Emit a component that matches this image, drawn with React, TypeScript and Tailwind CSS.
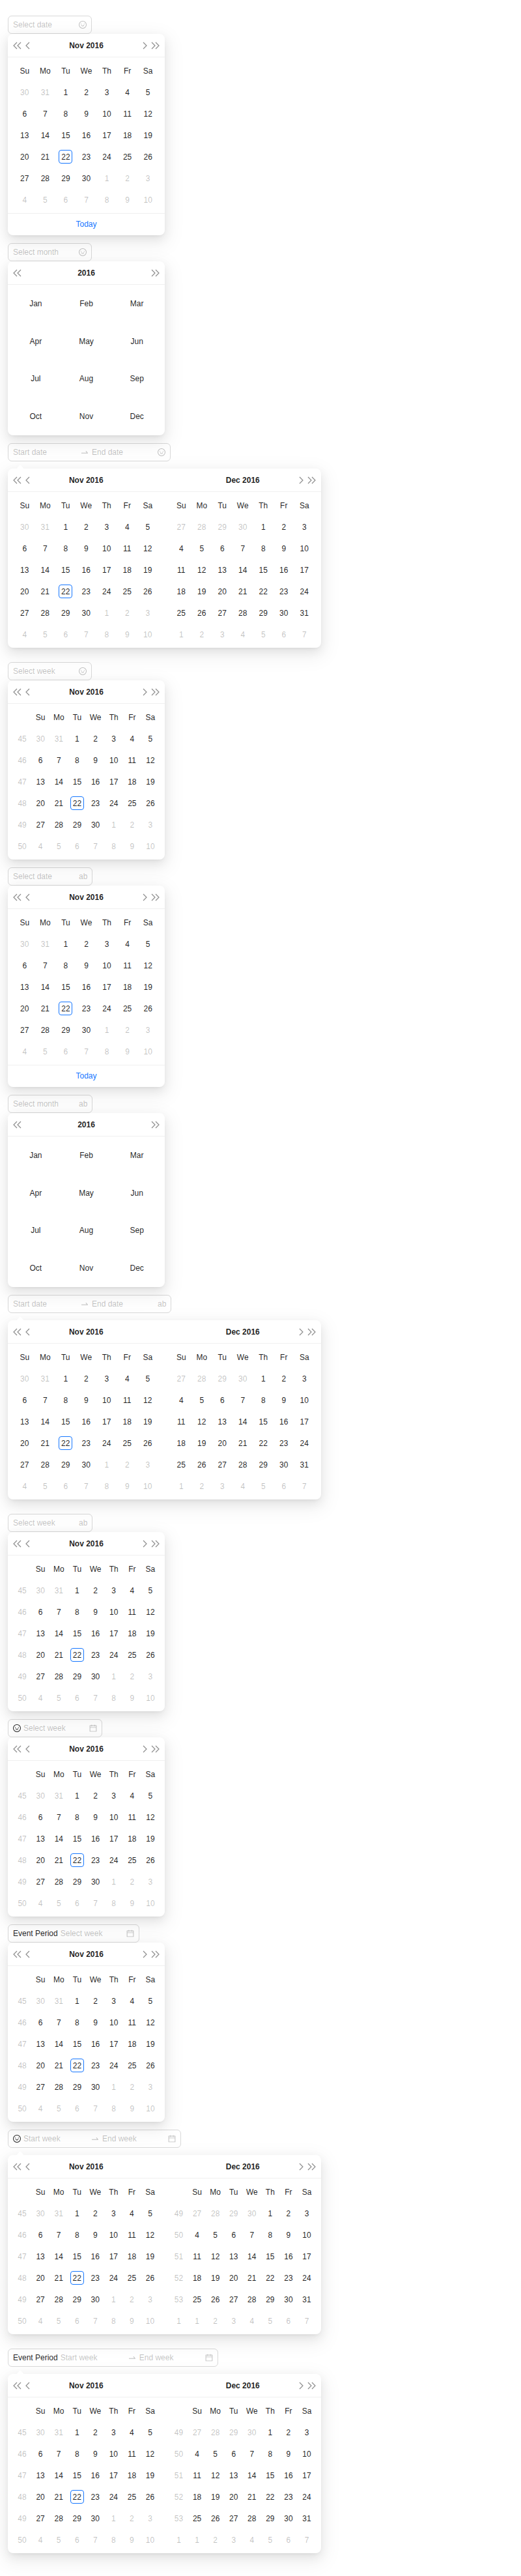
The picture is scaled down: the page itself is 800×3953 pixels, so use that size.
import { useId, type ReactNode } from 'react';
import { AiOutlineCalendar, AiOutlineSwapRight } from 'react-icons/ai';

const weekDays = ['Su', 'Mo', 'Tu', 'We', 'Th', 'Fr', 'Sa'];

const monthRows = [
  ['Jan', 'Feb', 'Mar'],
  ['Apr', 'May', 'Jun'],
  ['Jul', 'Aug', 'Sep'],
  ['Oct', 'Nov', 'Dec'],
];

type Month = {
  title: string;
  offset: number;
  length: number;
  previousLength: number;
  weeks: number[];
  today?: number;
};

const november: Month = {
  title: 'Nov 2016',
  offset: 2,
  length: 30,
  previousLength: 31,
  weeks: [45, 46, 47, 48, 49, 50],
  today: 22,
};

const december: Month = {
  title: 'Dec 2016',
  offset: 4,
  length: 31,
  previousLength: 30,
  weeks: [49, 50, 51, 52, 53, 1],
};

const smile = (
  <svg viewBox="64 64 896 896" className="size-3" fill="currentColor" aria-hidden="true">
    <circle cx="512" cy="512" r="410" fill="none" stroke="currentColor" strokeWidth="76" />
    <circle cx="336" cy="421" r="48" />
    <circle cx="688" cy="421" r="48" />
    <path d="M664 533h-48.1c-4.2 0-7.8 3.2-8.1 7.4C604 589.9 562.5 629 512 629s-92.1-39.1-95.8-88.6c-.3-4.2-3.9-7.4-8.1-7.4H360a8 8 0 0 0-8 8.4c4.4 84.3 74.5 151.6 160 151.6s155.6-67.3 160-151.6a8 8 0 0 0-8-8.4z" />
  </svg>
);
const calendar = <AiOutlineCalendar viewBox="64 64 896 896" className="size-3" aria-hidden="true" />;

function getDay(month: Month, index: number) {
  const day = index - month.offset + 1;
  if (day < 1) return { day: day + month.previousLength, inView: false };
  if (day > month.length) return { day: day - month.length, inView: false };
  return { day, inView: true };
}

type NavKind = 'superPrev' | 'prev' | 'next' | 'superNext';

const navs: Record<NavKind, { label: string; path: string; className: string; viewBox: string }> = {
  superPrev: { label: 'Previous year', path: 'M6 1L1 6l5 5M12 1L7 6l5 5', className: 'w-[13px]', viewBox: '0 0 13 12' },
  prev: { label: 'Previous month', path: 'M6 1L1 6l5 5', className: 'w-[7px]', viewBox: '0 0 7 12' },
  next: { label: 'Next month', path: 'M1 1l5 5l-5 5', className: 'w-[7px]', viewBox: '0 0 7 12' },
  superNext: { label: 'Next year', path: 'M1 1l5 5l-5 5M7 1l5 5l-5 5', className: 'w-[13px]', viewBox: '0 0 13 12' },
};

function NavButton({ kind }: { kind: NavKind }) {
  const nav = navs[kind];
  return (
    <button type="button" aria-label={nav.label} className="flex cursor-pointer items-center text-black/45">
      <svg viewBox={nav.viewBox} className={`h-3 ${nav.className}`} fill="none" stroke="currentColor" strokeWidth="1.2">
        <path d={nav.path} />
      </svg>
    </button>
  );
}

function PanelHeader({ title, before, after }: { title: string; before: NavKind[]; after: NavKind[] }) {
  return (
    <div className="grid h-9 grid-cols-[1fr_auto_1fr] items-center border-b border-[#f0f0f0] px-2">
      <div className="flex gap-1.5">
        {before.map((kind) => (
          <NavButton key={kind} kind={kind} />
        ))}
      </div>
      <button type="button" className="cursor-pointer leading-8 font-bold">
        {title}
      </button>
      <div className="flex justify-end gap-1.5">
        {after.map((kind) => (
          <NavButton key={kind} kind={kind} />
        ))}
      </div>
    </div>
  );
}

type DatePanelProps = {
  month: Month;
  showWeek?: boolean;
  before?: NavKind[];
  after?: NavKind[];
};

function DatePanel({
  month,
  showWeek = false,
  before = ['superPrev', 'prev'],
  after = ['next', 'superNext'],
}: DatePanelProps) {
  return (
    <div className="min-w-0 flex-1">
      <PanelHeader title={month.title} before={before} after={after} />
      <div className={`py-1 ${showWeek ? 'px-2' : 'px-2.5'}`}>
        <table className="w-full table-fixed border-collapse text-center">
          <thead>
            <tr className="h-[33px]">
              {showWeek && <th aria-label="Week" />}
              {weekDays.map((day) => (
                <th key={day} scope="col" className="p-0 font-normal">
                  {day}
                </th>
              ))}
            </tr>
          </thead>
          <tbody>
            {month.weeks.map((week, row) => (
              <tr key={week} className="h-[33px]">
                {showWeek && <td className="p-0 text-black/25">{week}</td>}
                {weekDays.map((name, column) => {
                  const { day, inView } = getDay(month, row * 7 + column);
                  const isToday = inView && day === month.today;
                  return (
                    <td key={name} className="p-0">
                      <button
                        type="button"
                        className={`mx-auto flex size-[21px] cursor-pointer items-center justify-center rounded border ${
                          isToday ? 'border-[#1677ff]' : 'border-transparent'
                        } ${inView ? '' : 'text-black/25'}`}
                      >
                        {day}
                      </button>
                    </td>
                  );
                })}
              </tr>
            ))}
          </tbody>
        </table>
      </div>
    </div>
  );
}

function MonthPanel() {
  return (
    <div className="min-w-0 flex-1">
      <PanelHeader title="2016" before={['superPrev']} after={['superNext']} />
      <div className="px-1">
        <table className="h-[231px] w-full table-fixed border-collapse text-center">
          <tbody>
            {monthRows.map((row) => (
              <tr key={row[0]}>
                {row.map((name) => (
                  <td key={name} className="p-0">
                    <button type="button" className="cursor-pointer px-2">
                      {name}
                    </button>
                  </td>
                ))}
              </tr>
            ))}
          </tbody>
        </table>
      </div>
    </div>
  );
}

function Popup({ children, className = 'w-[241px]' }: { children: ReactNode; className?: string }) {
  return (
    <div
      className={`relative z-10 rounded-lg bg-white shadow-[0_6px_16px_0_rgba(0,0,0,0.08),0_3px_6px_-4px_rgba(0,0,0,0.12),0_9px_28px_8px_rgba(0,0,0,0.05)] ${className}`}
    >
      {children}
    </div>
  );
}

type PickerInputProps = {
  placeholders: string[];
  prefix?: ReactNode;
  suffix: ReactNode;
};

function PickerInput({ placeholders, prefix, suffix }: PickerInputProps) {
  const id = useId();
  return (
    <div className="flex h-7 w-fit items-center rounded-md border border-[#d9d9d9] bg-white px-[7px]">
      {prefix && (
        <label htmlFor={id} className="mr-1">
          {prefix}
        </label>
      )}
      {placeholders.map((placeholder, index) => (
        <div key={placeholder} className="flex items-center">
          {index > 0 && (
            <span className="flex w-6 justify-center pl-0.5 text-black/25">
              <AiOutlineSwapRight className="size-3.5" aria-hidden="true" />
            </span>
          )}
          <input
            id={index === 0 ? id : undefined}
            type="text"
            aria-label={placeholder}
            placeholder={placeholder}
            className="w-[97px] outline-none placeholder:text-black/25"
          />
        </div>
      ))}
      <span className="ml-1 text-black/25">{suffix}</span>
    </div>
  );
}

function DatePicker({ suffix }: { suffix: ReactNode }) {
  return (
    <div className="mb-3">
      <PickerInput placeholders={['Select date']} suffix={suffix} />
      <Popup>
        <DatePanel month={november} />
        <div className="border-t border-[#f0f0f0] text-center">
          <button type="button" className="cursor-pointer leading-[33px] text-[#1677ff]">
            Today
          </button>
        </div>
      </Popup>
    </div>
  );
}

function MonthPicker({ suffix }: { suffix: ReactNode }) {
  return (
    <div className="mb-3">
      <PickerInput placeholders={['Select month']} suffix={suffix} />
      <Popup>
        <MonthPanel />
      </Popup>
    </div>
  );
}

function WeekPicker({ prefix, suffix }: { prefix?: ReactNode; suffix: ReactNode }) {
  return (
    <div className="mb-3">
      <PickerInput placeholders={['Select week']} prefix={prefix} suffix={suffix} />
      <Popup>
        <DatePanel month={november} showWeek />
      </Popup>
    </div>
  );
}

type RangePickerProps = {
  unit: 'date' | 'week';
  prefix?: ReactNode;
  suffix: ReactNode;
};

function RangePicker({ unit, prefix, suffix }: RangePickerProps) {
  const showWeek = unit === 'week';
  return (
    <div className="mb-[22px]">
      <PickerInput placeholders={[`Start ${unit}`, `End ${unit}`]} prefix={prefix} suffix={suffix} />
      <Popup className="mt-[11px] w-[481px]">
        <svg viewBox="0 0 14 6" className="absolute -top-1.5 left-3 h-1.5 w-3.5 fill-white" aria-hidden="true">
          <path d="M0 6C1.5 6 2 5.5 3 4.5L6 1Q7 0 8 1L11 4.5C12 5.5 12.5 6 14 6Z" />
        </svg>
        <div className="flex">
          <DatePanel month={november} showWeek={showWeek} after={[]} />
          <DatePanel month={december} showWeek={showWeek} before={[]} />
        </div>
      </Popup>
    </div>
  );
}

export default function App() {
  return (
    <main className="min-h-screen overflow-hidden bg-white px-3 pt-6 font-['Liberation_Sans',Arial,sans-serif] text-xs text-black/88">
      {[smile, 'ab'].map((suffix, index) => (
        <section key={index}>
          <DatePicker suffix={suffix} />
          <MonthPicker suffix={suffix} />
          <RangePicker unit="date" suffix={suffix} />
          <WeekPicker suffix={suffix} />
        </section>
      ))}
      <section className="pb-3">
        <WeekPicker prefix={smile} suffix={calendar} />
        <WeekPicker prefix="Event Period" suffix={calendar} />
        <RangePicker unit="week" prefix={smile} suffix={calendar} />
        <RangePicker unit="week" prefix="Event Period" suffix={calendar} />
      </section>
    </main>
  );
}
